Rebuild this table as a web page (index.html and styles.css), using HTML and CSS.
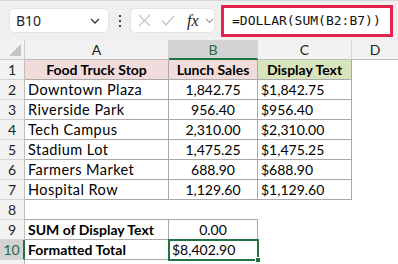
FILE: index.html
```html
<!DOCTYPE html>
<html>
<head>
<meta charset="utf-8">
<link rel="stylesheet" href="styles.css">
</head>
<body>
<div class="app">
  <div class="toolbar">
    <div class="namebox">
      <span class="nb-text">B10</span>
      <svg class="chev" width="10" height="6" viewBox="0 0 10 6"><path d="M1 1 L5 5 L9 1" fill="none" stroke="#333" stroke-width="1.3"/></svg>
    </div>
    <div class="dots"><i></i><i></i><i></i></div>
    <div class="fxbox">
      <svg class="ico" width="13" height="13" viewBox="0 0 13 13"><path d="M1 1 L12 12 M12 1 L1 12" stroke="#c4c4c4" stroke-width="1.2" fill="none"/></svg>
      <svg class="ico" width="14" height="11" viewBox="0 0 14 11"><path d="M1 5.5 L5 10 L13 1" stroke="#c4c4c4" stroke-width="1.2" fill="none"/></svg>
      <span class="fx">fx</span>
      <svg class="chev2" width="9" height="6" viewBox="0 0 9 6"><path d="M1 1 L4.5 4.5 L8 1" fill="none" stroke="#9a9a9a" stroke-width="1.1"/></svg>
    </div>
    <div class="formula">=DOLLAR(SUM(B2:B7))</div>
  </div>
  <div class="sheet">
    <div class="corner"><span class="tri"></span></div>
    <div class="ch">A</div>
    <div class="ch sel">B</div>
    <div class="ch">C</div>
    <div class="ch last">D</div>

    <div class="rh">1</div>
    <div class="c b pink bold ctr">Food Truck Stop</div>
    <div class="c b pink bold ctr">Lunch Sales</div>
    <div class="c b green bold ctr">Display Text</div>
    <div class="c"></div>

    <div class="rh">2</div>
    <div class="c b">Downtown Plaza</div>
    <div class="c b n ctr">1,842.75</div>
    <div class="c b n">$1,842.75</div>
    <div class="c"></div>

    <div class="rh">3</div>
    <div class="c b">Riverside Park</div>
    <div class="c b n ctr">956.40</div>
    <div class="c b n">$956.40</div>
    <div class="c"></div>

    <div class="rh">4</div>
    <div class="c b">Tech Campus</div>
    <div class="c b n ctr">2,310.00</div>
    <div class="c b n">$2,310.00</div>
    <div class="c"></div>

    <div class="rh">5</div>
    <div class="c b">Stadium Lot</div>
    <div class="c b n ctr">1,475.25</div>
    <div class="c b n">$1,475.25</div>
    <div class="c"></div>

    <div class="rh">6</div>
    <div class="c b">Farmers Market</div>
    <div class="c b n ctr">688.90</div>
    <div class="c b n">$688.90</div>
    <div class="c"></div>

    <div class="rh">7</div>
    <div class="c b">Hospital Row</div>
    <div class="c b n ctr">1,129.60</div>
    <div class="c b n">$1,129.60</div>
    <div class="c"></div>

    <div class="rh">8</div>
    <div class="c bb"></div>
    <div class="c bb"></div>
    <div class="c"></div>
    <div class="c"></div>

    <div class="rh">9</div>
    <div class="c b bold">SUM of Display Text</div>
    <div class="c b n ctr">0.00</div>
    <div class="c"></div>
    <div class="c"></div>

    <div class="rh selr">10</div>
    <div class="c b bold">Formatted Total</div>
    <div class="c b n active">$8,402.90<span class="handle"></span></div>
    <div class="c"></div>
    <div class="c"></div>

    <div class="rh tail"></div>
    <div class="c tailc"></div>
    <div class="c tailc"></div>
    <div class="c tailc"></div>
    <div class="c tailc"></div>
  </div>
</div>
</body>
</html>
```

FILE: styles.css
```css
* { box-sizing: border-box; }
html, body { margin: 0; padding: 0; }
body { width: 398px; height: 264px; overflow: hidden; background: #fff; font-family: "Lato", "Liberation Sans", sans-serif; color: #000; }
.app { width: 398px; height: 264px; display: flex; flex-direction: column; }

.toolbar {
  height: 40px;
  flex: none;
  background: #efefef;
  border-top: 1px solid #d9d9d9;
  display: flex;
  align-items: center;
  padding-left: 9px;
  position: relative;
}
.namebox {
  width: 100px;
  height: 25px;
  background: #fff;
  border: 1px solid #e3e3e3;
  border-radius: 5px;
  display: flex;
  align-items: center;
  justify-content: space-between;
  padding: 0 8px 0 6px;
  font-family: "Noto Sans", "Liberation Sans", sans-serif;
  font-size: 14px;
  color: #222;
}
.dots { width: 21px; display: flex; flex-direction: column; align-items: center; gap: 3px; }
.dots i { display: block; width: 2px; height: 2px; background: #444; }
.fxbox {
  width: 85px;
  height: 25px;
  background: #fff;
  border: 1px solid #e3e3e3;
  border-radius: 5px;
  display: flex;
  align-items: center;
  padding-left: 7px;
  gap: 10px;
}
.fxbox .ico { flex: none; }
.fx { font-family: "Liberation Serif", serif; font-style: italic; font-size: 16px; color: #222; margin-left: 2px; margin-right: -4px; }
.formula {
  margin-left: 6px;
  width: 172px;
  height: 32px;
  border: 3px solid #e2254f;
  background: #fff;
  font-family: "DejaVu Sans Mono", "Liberation Mono", monospace;
  font-size: 13px;
  line-height: 26px;
  padding-left: 8px;
  white-space: nowrap;
  color: #111;
}

.sheet {
  flex: 1;
  display: grid;
  grid-template-columns: 25px 144px 89px 94px 1fr;
  grid-template-rows: 20px repeat(10, 20px) 1fr;
  font-size: 14.5px;
}
.corner { background: #f2f2f2; border-right: 1px solid #cfcfcf; border-bottom: 1px solid #cfcfcf; position: relative; }
.tri { position: absolute; right: 3px; bottom: 3px; width: 0; height: 0; border-left: 12px solid transparent; border-bottom: 12px solid #c3c3c3; }
.ch {
  background: #f2f2f2;
  border-right: 1px solid #d4d4d4;
  border-bottom: 1px solid #bdbdbd;
  text-align: center;
  line-height: 19px;
  font-size: 14px;
  color: #222;
}
.ch.last { border-right: none; }
.ch.sel { background: #d3d3d3; color: #1e6b41; border-bottom: 2px solid #1e7145; }
.rh {
  background: #f2f2f2;
  border-right: 1px solid #bdbdbd;
  border-bottom: 1px solid #d4d4d4;
  text-align: center;
  line-height: 19px;
  font-size: 14px;
  color: #222;
}
.rh.selr { background: #d3d3d3; color: #1e6b41; border-right: 2px solid #1e7145; }
.rh.tail { border-bottom: none; }
.c { line-height: 19px; padding: 0 3px; white-space: nowrap; position: relative; letter-spacing: 0.45px; }
.c.n { font-size: 14px; letter-spacing: 0; }
.c.b { border-right: 1px solid #a9a9a9; border-bottom: 1px solid #a9a9a9; }
.c.bb { border-bottom: 1px solid #a9a9a9; }
.ctr { text-align: center; }
.bold { font-weight: bold; font-size: 14px; letter-spacing: 0; }
.pink { background: #f2dcdb; }
.green { background: #d8e4bc; }
.active { outline: 2px solid #217346; outline-offset: -1px; z-index: 2; }
.handle { position: absolute; right: -4px; bottom: -4px; width: 6px; height: 6px; background: #217346; border: 1px solid #fff; }
```
